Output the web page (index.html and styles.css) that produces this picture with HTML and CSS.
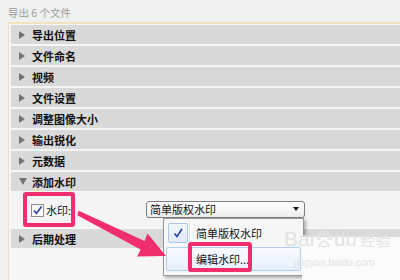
FILE: index.html
```html
<!DOCTYPE html>
<html lang="zh-Hans">
<head>
  <meta charset="UTF-8" />
  <title>导出 6 个文件</title>
  <link rel="stylesheet" href="styles.css">
</head>
<body>
  <div class="title">导出 6 个文件</div>

  <div class="panel">
    <div class="row"><span class="tri-r"></span>导出位置</div>
    <div class="row"><span class="tri-r"></span>文件命名</div>
    <div class="row"><span class="tri-r"></span>视频</div>
    <div class="row"><span class="tri-r"></span>文件设置</div>
    <div class="row"><span class="tri-r"></span>调整图像大小</div>
    <div class="row"><span class="tri-r"></span>输出锐化</div>
    <div class="row"><span class="tri-r"></span>元数据</div>
    <div class="row"><span class="tri-d"></span>添加水印</div>
    <div class="expanded">
      <span class="checkbox">
        <svg width="11" height="11" viewBox="0 0 11 11"><path d="M2 5.5 L4.5 8.5 L9.5 1.5" fill="none" stroke="#2a3fa0" stroke-width="1.6"/></svg>
      </span>
      <span class="label">水印:</span>
      <div class="select">
        <span>简单版权水印</span>
        <span class="tri-sel"></span>
      </div>
    </div>
    <div class="row"><span class="tri-r"></span>后期处理</div>
  </div>

  <!-- 下拉菜单 -->
  <div class="menu">
    <div class="menu-item">
      <span class="menu-icon checked">
        <svg width="12" height="12" viewBox="0 0 12 12"><path d="M2.5 6.5 L5 9.5 L10 2" fill="none" stroke="#1b3ca8" stroke-width="1.5"/></svg>
      </span>
      <span>简单版权水印</span>
    </div>
    <div class="menu-item hover">
      <span class="menu-icon"></span>
      <span>编辑水印...</span>
    </div>
  </div>

  <!-- 标注 -->
  <div class="mark mark-check"></div>
  <div class="mark mark-edit"></div>
  <svg class="pointer" width="400" height="280" viewBox="0 0 400 280">
    <polygon points="78.7,210.8 144.6,240.9 147.5,233.5 166,256 137.2,256.5 140.6,249.5 77.3,215.2" fill="#f02d6d"/>
  </svg>

  <div class="watermark">
    <div class="wm-logo">
      <span class="wm-bai">Bai</span>
      <svg width="18" height="18" viewBox="0 0 18 18">
        <g fill="none" stroke="#e2e2e2" stroke-width="1.3">
          <ellipse cx="3.5" cy="7" rx="1.8" ry="2.3"/>
          <ellipse cx="7" cy="3" rx="1.8" ry="2.2"/>
          <ellipse cx="11.5" cy="3" rx="1.8" ry="2.2"/>
          <ellipse cx="15" cy="7" rx="1.8" ry="2.3"/>
          <path d="M4 15.5 Q9 7 14 15.5 Q9 18 4 15.5 Z"/>
        </g>
      </svg>
      <span class="wm-du">du</span>
      <span class="wm-jy">经验</span>
    </div>
    <div class="wm-url">jingyan.baidu.com</div>
  </div>
</body>
</html>
```

FILE: styles.css
```css
body {
  margin: 0;
  width: 400px;
  height: 280px;
  overflow: hidden;
  position: relative;
  background: #f0f0f0;
  font-family: "Noto Sans CJK SC", "Liberation Sans", sans-serif;
}
.title {
  height: 18px;
  padding: 4px 0 0 8px;
  line-height: 18px;
  font-size: 10.5px;
  color: #9c9c9c;
}
.panel {
  margin-left: 8px;
  height: 255px;
  border-left: 1px solid #eee2c2;
  border-top: 2px solid #f1e2bb;
  padding: 1px 0 0 2px;
  background: #f6f6f6;
  display: flex;
  flex-direction: column;
  gap: 2px;
}
.row {
  height: 19px;
  flex: none;
  background: #d9d9d9;
  display: flex;
  align-items: center;
  padding-left: 8px;
  font-size: 11px;
  font-weight: bold;
  color: #111;
}
.tri-r {
  width: 0;
  height: 0;
  border-left: 6px solid #747474;
  border-top: 4px solid transparent;
  border-bottom: 4px solid transparent;
  margin-right: 7px;
}
.tri-d {
  width: 0;
  height: 0;
  border-top: 7px solid #747474;
  border-left: 4px solid transparent;
  border-right: 4px solid transparent;
  margin-right: 5px;
}
.expanded {
  height: 36px;
  flex: none;
  margin: -1px 0;
  background: #f4f4f4;
  display: flex;
  align-items: center;
  padding-left: 20px;
  font-size: 11px;
  color: #111;
}
.checkbox {
  width: 11px;
  height: 11px;
  border: 1px solid #8e8f8f;
  background: linear-gradient(#f2f2f2, #ffffff);
  display: flex;
  align-items: center;
  justify-content: center;
  margin-right: 2px;
}
.label {
  width: 100px;
}
.select {
  width: 149px;
  height: 15px;
  border: 1px solid #7d7d7d;
  border-radius: 3px;
  background: linear-gradient(#ffffff, #ececec);
  display: flex;
  align-items: center;
  justify-content: space-between;
  padding: 0 5px 0 3px;
  margin-top: -2px;
}
.tri-sel {
  width: 0;
  height: 0;
  border-top: 4px solid #111;
  border-left: 3.5px solid transparent;
  border-right: 3.5px solid transparent;
}
.menu {
  position: absolute;
  left: 163px;
  top: 218px;
  width: 135px;
  height: 52px;
  padding: 2px;
  border: 1px solid #979797;
  background: #f7f7f7;
  box-shadow: 2px 2px 3px rgba(0, 0, 0, 0.3);
  display: flex;
  flex-direction: column;
  gap: 2px;
  font-size: 11px;
  color: #111;
}
.menu::before {
  content: "";
  position: absolute;
  left: 25px;
  top: 2px;
  bottom: 2px;
  border-left: 1px solid #e0e0e0;
  border-right: 1px solid #ffffff;
}
.menu-item {
  height: 22px;
  display: flex;
  align-items: center;
  border: 1px solid transparent;
  border-radius: 2px;
}
.menu-item.hover {
  border-color: #b0d0ee;
  background: linear-gradient(#f6fafe, #e6f0fb);
}
.menu-icon {
  width: 18px;
  height: 18px;
  margin: 0 8px 0 1px;
  border: 1px solid transparent;
  border-radius: 2px;
  display: flex;
  align-items: center;
  justify-content: center;
}
.menu-icon.checked {
  border-color: #a9c7e6;
  background: linear-gradient(#f2f7fd, #dfeaf7);
}
.mark {
  position: absolute;
  border: 4px solid #f02d6d;
  border-radius: 3px;
}
.mark-check {
  left: 23px;
  top: 192px;
  width: 44px;
  height: 27px;
}
.mark-edit {
  left: 188px;
  top: 242px;
  width: 56px;
  height: 22px;
}
.pointer {
  position: absolute;
  left: 0;
  top: 0;
}
.watermark {
  position: absolute;
  left: 302px;
  top: 237px;
  width: 98px;
  height: 43px;
  background: #fbfbfb;
  overflow: visible;
}
.wm-logo {
  position: absolute;
  left: -18px;
  top: -10px;
  display: flex;
  align-items: center;
  gap: 1px;
  color: #e2e2e2;
}
.wm-bai {
  font-family: "Liberation Sans", sans-serif;
  font-size: 21px;
}
.wm-du {
  font-family: "Liberation Sans", sans-serif;
  font-size: 20px;
}
.wm-jy {
  font-size: 15px;
  margin-left: 3px;
}
.wm-url {
  position: absolute;
  left: -8px;
  top: 20px;
  font-family: "Liberation Sans", sans-serif;
  font-size: 10px;
  color: #e2e2e2;
}
```
